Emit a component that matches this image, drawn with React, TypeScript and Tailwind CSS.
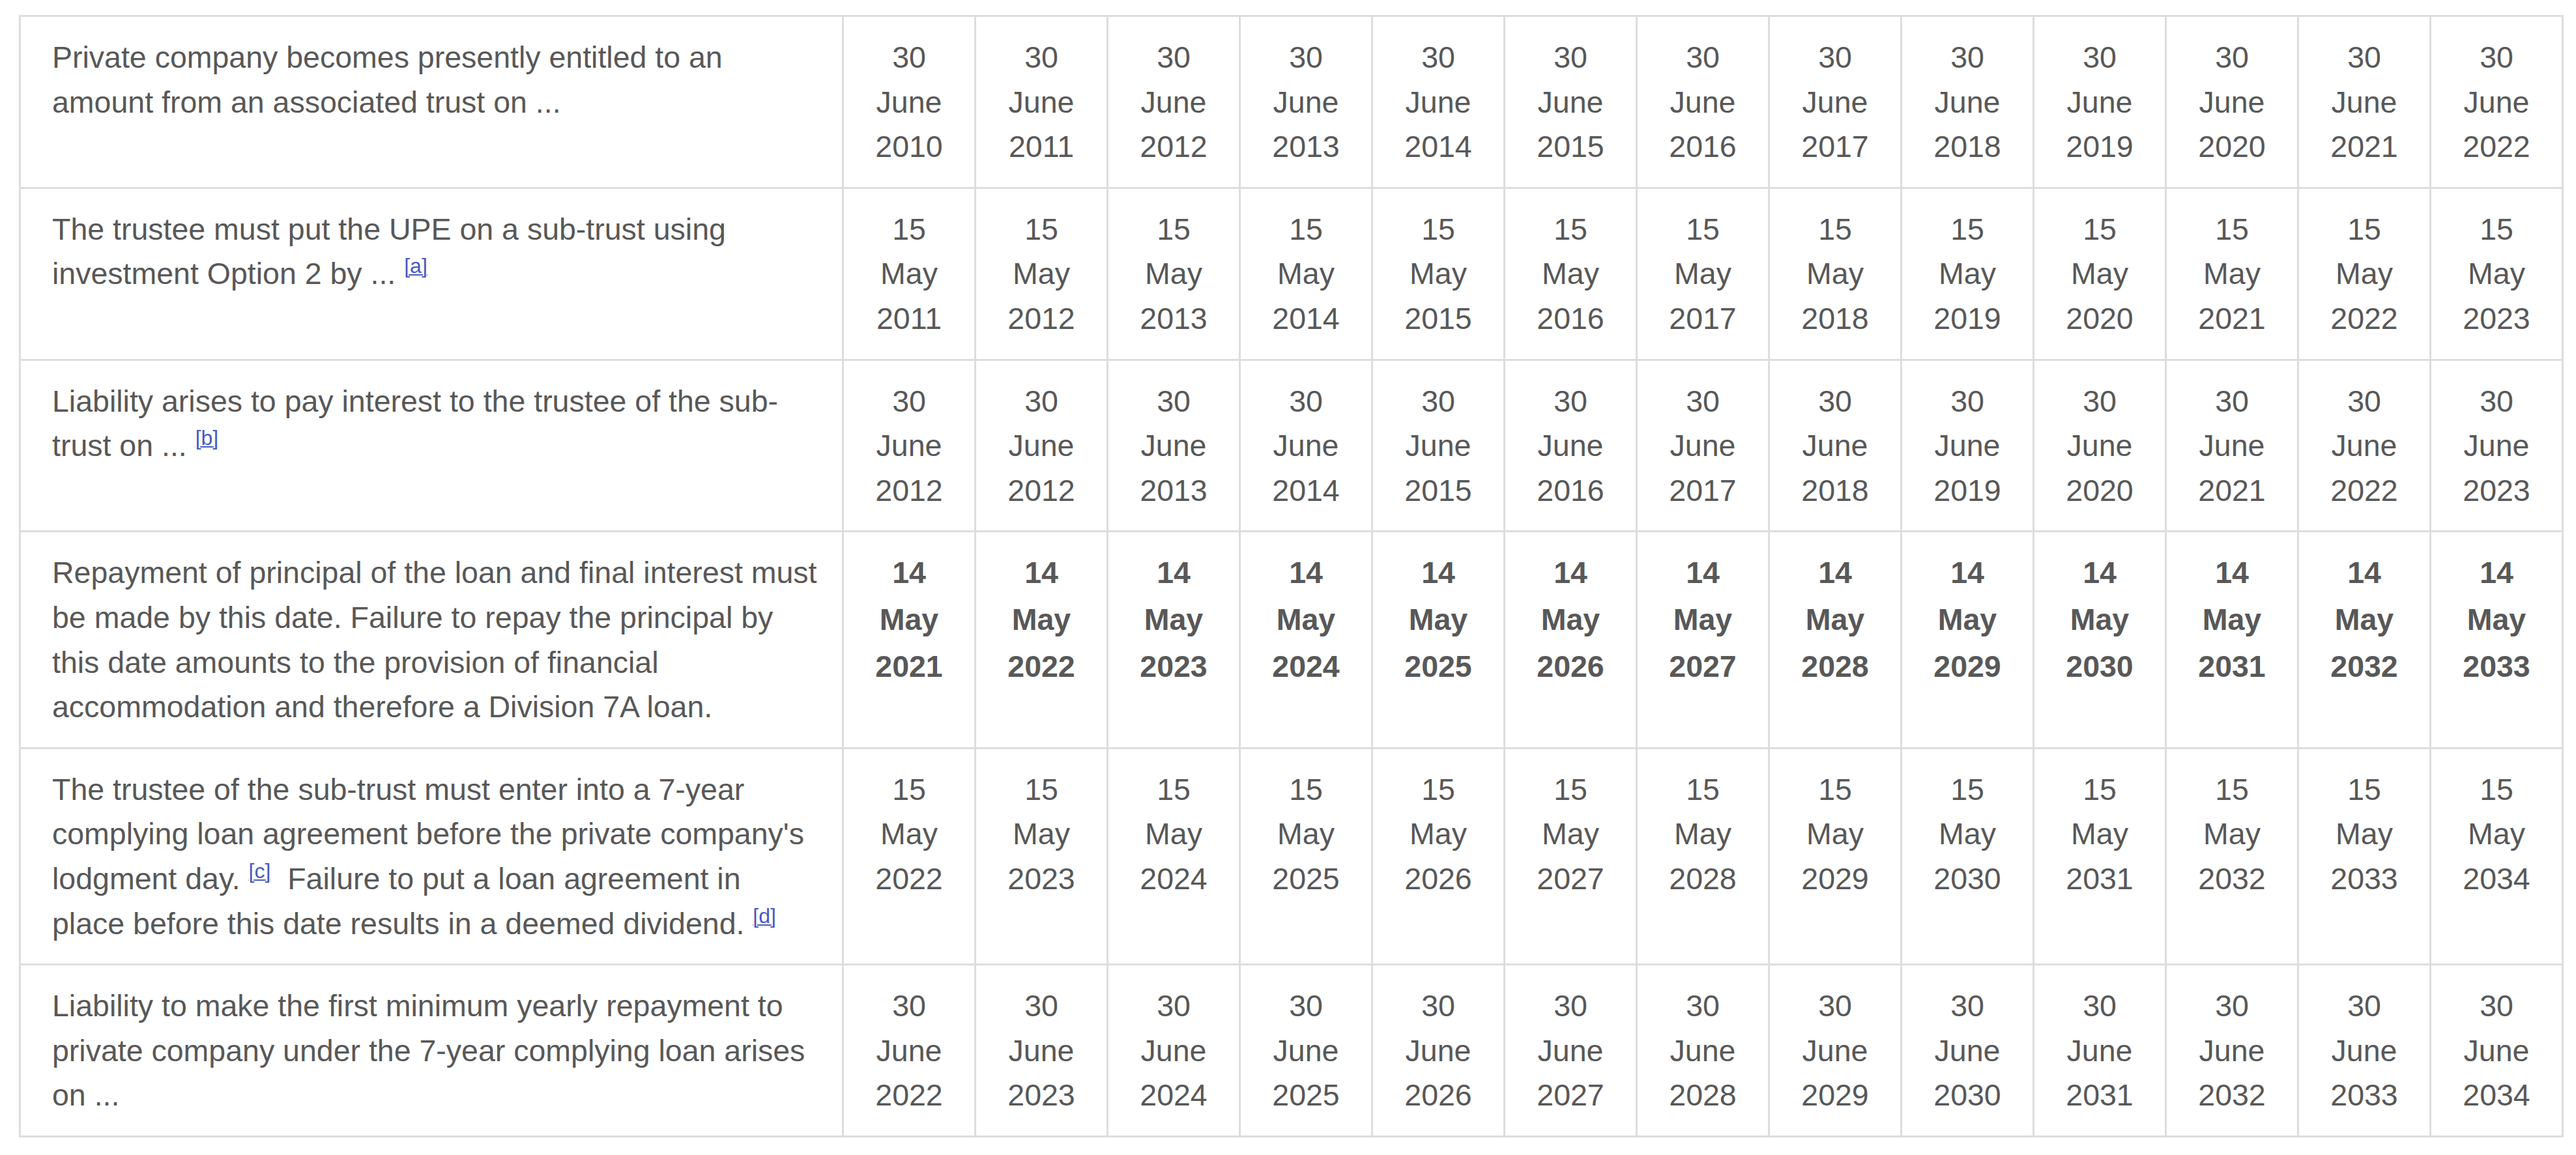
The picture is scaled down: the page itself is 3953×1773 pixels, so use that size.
import React from "react";

type Row = {
  label: React.ReactNode;
  day: string;
  month: string;
  years: number[];
  bold?: boolean;
};

function Note({ children }: { children: React.ReactNode }) {
  return (
    <sup className="static align-[17px] text-[32px] leading-none text-[#4759c0] underline decoration-[2px] underline-offset-[2px]">
      [{children}]
    </sup>
  );
}

const range = (start: number) => Array.from({ length: 13 }, (_, i) => start + i);

const rows: Row[] = [
  {
    label: <>Private company becomes presently entitled to an amount from an associated trust on ...</>,
    day: "30",
    month: "June",
    years: range(2010),
  },
  {
    label: (
      <>
        The trustee must put the UPE on a sub-trust using investment Option 2 by ... <Note>a</Note>
      </>
    ),
    day: "15",
    month: "May",
    years: range(2011),
  },
  {
    label: (
      <>
        Liability arises to pay interest to the trustee of the sub-trust on ... <Note>b</Note>
      </>
    ),
    day: "30",
    month: "June",
    years: [2012, 2012, 2013, 2014, 2015, 2016, 2017, 2018, 2019, 2020, 2021, 2022, 2023],
  },
  {
    label: (
      <>
        Repayment of principal of the loan and final interest must be made by this date. Failure to repay
        the principal by this date amounts to the provision of financial accommodation and therefore a
        Division 7A loan.
      </>
    ),
    day: "14",
    month: "May",
    years: range(2021),
    bold: true,
  },
  {
    label: (
      <>
        The trustee of the sub-trust must enter into a 7-year complying loan agreement before the private
        company's lodgment day. <Note>c</Note>
        {"\u00a0 "}Failure to put a loan agreement in place before this date results in a deemed dividend.{" "}
        <Note>d</Note>
      </>
    ),
    day: "15",
    month: "May",
    years: range(2022),
  },
  {
    label: (
      <>
        Liability to make the first minimum yearly repayment to private company under the 7-year complying
        loan arises on ...
      </>
    ),
    day: "30",
    month: "June",
    years: range(2022),
  },
];

export default function App() {
  return (
    <div className="min-h-screen bg-white pl-[29px] pt-[23px] font-['Liberation_Sans',Arial,sans-serif] text-[#585858]">
      <table className="table-fixed border-collapse w-[3905px] text-[46.5px] leading-[68.6px]">
        <colgroup>
          <col className="w-[1263px]" />
          {range(0).map((i) => (
            <col key={i} className="w-[203px]" />
          ))}
        </colgroup>
        <tbody>
          {rows.map((row, ri) => (
            <tr key={ri}>
              <td className="border-[3px] border-[#dddddd] pl-[48px] pr-[36px] pt-[28px] pb-[27px] align-top text-left">
                {row.label}
              </td>
              {row.years.map((y, ci) => (
                <td
                  key={ci}
                  className={
                    row.bold
                      ? "border-[3px] border-[#dddddd] pt-[26px] pb-[27px] align-top text-center font-bold leading-[72px]"
                      : "border-[3px] border-[#dddddd] pt-[28px] pb-[27px] align-top text-center"
                  }
                >
                  {row.day}
                  <br />
                  {row.month}
                  <br />
                  {y}
                </td>
              ))}
            </tr>
          ))}
        </tbody>
      </table>
    </div>
  );
}
